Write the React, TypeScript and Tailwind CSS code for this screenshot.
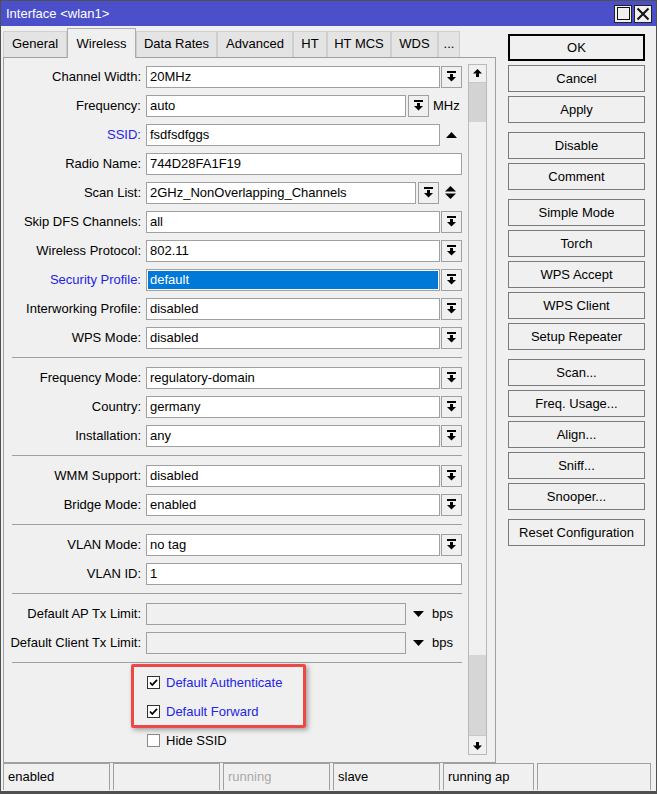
import React from "react";

const DropIcon = () => (
  <svg width="9" height="11" viewBox="0 0 9 11">
    <rect x="0" y="0" width="9" height="2" fill="#000" />
    <rect x="3" y="3" width="3" height="3" fill="#000" />
    <polygon points="0,6 9,6 4.5,10.5" fill="#000" />
  </svg>
);

const DropBtn = ({ ml = "ml-[1px]" }: { ml?: string }) => (
  <div className={`${ml} flex h-[22px] w-[21px] shrink-0 items-center justify-center border border-[#a0a0a0] bg-[#f0f0f0]`}>
    <DropIcon />
  </div>
);

const Field = ({ w, value, disabled, selected }: { w: string; value?: string; disabled?: boolean; selected?: boolean }) => (
  <div
    className={`${w} h-[22px] shrink-0 border border-[#a0a0a0] ${disabled ? "bg-[#f0f0f0]" : "bg-white"} ${selected ? "p-[1px]" : "pl-[3px]"} leading-[20px] text-black whitespace-nowrap overflow-hidden`}
  >
    {selected ? (
      <div className="h-[18px] bg-[#0078d7] pl-[2px] leading-[18px] text-white">{value}</div>
    ) : (
      value
    )}
  </div>
);

const Row = ({ label, blue, children }: { label: string; blue?: boolean; children: React.ReactNode }) => (
  <div className="flex h-[29px] items-center">
    <div className={`w-[137px] shrink-0 text-right whitespace-nowrap ${blue ? "text-[#2424e6]" : "text-black"}`}>{label}</div>
    <div className="ml-[5px] flex w-[316px] items-center">{children}</div>
  </div>
);

const SelectRow = ({ label, value, blue, selected }: { label: string; value: string; blue?: boolean; selected?: boolean }) => (
  <Row label={label} blue={blue}>
    <Field w="w-[294px]" value={value} selected={selected} />
    <DropBtn />
  </Row>
);

const Sep = () => (
  <div className="flex h-[11px] items-center">
    <div className="ml-[8px] h-px w-[450px] bg-[#a0a0a0]" />
  </div>
);

const Check = ({ label, checked, blue }: { label: string; checked?: boolean; blue?: boolean }) => (
  <div className="flex h-[29px] items-center">
    <div className={`ml-[143px] flex h-[13px] w-[13px] items-center justify-center border ${checked ? "border-[#333]" : "border-[#8a8a8a]"} bg-white`}>
      {checked && (
        <svg width="11" height="11" viewBox="0 0 11 11">
          <path d="M2 5.5 L4.3 8 L9 2.8" stroke="#000" strokeWidth="1.8" fill="none" />
        </svg>
      )}
    </div>
    <div className={`ml-[6px] ${blue ? "text-[#2424e6]" : "text-black"}`}>{label}</div>
  </div>
);

const Btn = ({ label, def }: { label: string; def?: boolean }) => (
  <div
    className={`flex h-[27px] w-[137px] items-center justify-center border ${def ? "border-black shadow-[inset_0_0_0_1px_#000]" : "border-[#7a7a7a]"} bg-[#f0f0f0] text-black`}
  >
    {label}
  </div>
);

const Tab = ({ label, w, active }: { label: string; w: string; active?: boolean }) =>
  active ? (
    <div className={`${w} relative z-10 -mb-px flex h-[30px] items-start justify-center border-x border-t border-[#adadad] bg-[#f0f0f0] pt-[5px]`}>
      {label}
    </div>
  ) : (
    <div className={`${w} flex h-[26px] items-center justify-center border-x border-t border-[#cfcfcf] bg-[#e4e4e4] pb-[1px]`}>
      {label}
    </div>
  );

const StatusCell = ({ w, text, gray }: { w: string; text?: string; gray?: boolean }) => (
  <div className={`${w} h-[27px] shrink-0 border-l border-t border-r border-[#a0a0a0] pl-[4px] leading-[26px] ${gray ? "text-[#a8a8a8]" : "text-black"}`}>
    {text}
  </div>
);

export default function App() {
  return (
    <div className="relative h-[794px] w-[657px] overflow-hidden border border-b-[3px] border-[#505050] bg-[#f0f0f0] font-['Liberation_Sans',Arial,sans-serif] text-[13px] text-black">
      {/* Title bar */}
      <div className="flex h-[25px] items-center justify-between bg-[#4b4fc9] pl-[5px] pr-[4px]">
        <div className="pt-[1px] text-white">Interface &lt;wlan1&gt;</div>
        <div className="flex gap-[2px]">
          <div className="flex h-[18px] w-[18px] items-center justify-center border border-[#222] bg-[#f0f0f0]">
            <div className="h-[13px] w-[13px] border-[1.5px] border-[#111]" />
          </div>
          <div className="flex h-[18px] w-[18px] items-center justify-center border border-[#222] bg-[#f0f0f0]">
            <svg width="14" height="14" viewBox="0 0 14 14">
              <path d="M1.5 1.5 L12.5 12.5 M12.5 1.5 L1.5 12.5" stroke="#111" strokeWidth="2" />
            </svg>
          </div>
        </div>
      </div>

      {/* Body */}
      <div className="flex h-[737px]">
        <div className="ml-[2px] flex w-[493px] flex-col">
          <div className="flex h-[31px] items-end">
            <Tab label="General" w="w-[64px]" />
            <Tab label="Wireless" w="w-[69px]" active />
            <Tab label="Data Rates" w="w-[81px]" />
            <Tab label="Advanced" w="w-[76px]" />
            <Tab label="HT" w="w-[34px]" />
            <Tab label="HT MCS" w="w-[64px]" />
            <Tab label="WDS" w="w-[47px]" />
            <Tab label="..." w="w-[22px]" />
          </div>
          <div className="flex h-[706px] border border-[#a0a0a0] bg-[#f0f0f0]">
            <div className="w-[463px] shrink-0 pt-[4px]">
              <SelectRow label="Channel Width:" value="20MHz" />
              <Row label="Frequency:">
                <Field w="w-[260px]" value="auto" />
                <DropBtn ml="ml-[2px]" />
                <div className="ml-[4px]">MHz</div>
              </Row>
              <Row label="SSID:" blue>
                <Field w="w-[294px]" value="fsdfsdfggs" />
                <div className="flex w-[22px] justify-center">
                  <svg width="11" height="6" viewBox="0 0 11 6">
                    <polygon points="0,6 11,6 5.5,0" fill="#000" />
                  </svg>
                </div>
              </Row>
              <Row label="Radio Name:">
                <Field w="w-[316px]" value="744D28FA1F19" />
              </Row>
              <Row label="Scan List:">
                <Field w="w-[270px]" value="2GHz_NonOverlapping_Channels" />
                <DropBtn ml="ml-[2px]" />
                <div className="flex w-[23px] justify-center">
                  <svg width="11" height="13" viewBox="0 0 11 13">
                    <polygon points="0,5.5 11,5.5 5.5,0" fill="#000" />
                    <polygon points="0,7.5 11,7.5 5.5,13" fill="#000" />
                  </svg>
                </div>
              </Row>
              <SelectRow label="Skip DFS Channels:" value="all" />
              <SelectRow label="Wireless Protocol:" value="802.11" />
              <SelectRow label="Security Profile:" value="default" blue selected />
              <SelectRow label="Interworking Profile:" value="disabled" />
              <SelectRow label="WPS Mode:" value="disabled" />
              <Sep />
              <SelectRow label="Frequency Mode:" value="regulatory-domain" />
              <SelectRow label="Country:" value="germany" />
              <SelectRow label="Installation:" value="any" />
              <Sep />
              <SelectRow label="WMM Support:" value="disabled" />
              <SelectRow label="Bridge Mode:" value="enabled" />
              <Sep />
              <SelectRow label="VLAN Mode:" value="no tag" />
              <Row label="VLAN ID:">
                <Field w="w-[316px]" value="1" />
              </Row>
              <Sep />
              {["Default AP Tx Limit:", "Default Client Tx Limit:"].map((l) => (
                <Row key={l} label={l}>
                  <Field w="w-[260px]" disabled />
                  <div className="flex w-[24px] justify-center">
                    <svg width="11" height="6" viewBox="0 0 11 6">
                      <polygon points="0,0 11,0 5.5,6" fill="#000" />
                    </svg>
                  </div>
                  <div className="ml-[2px]">bps</div>
                </Row>
              ))}
              <Sep />
              <Check label="Default Authenticate" checked blue />
              <Check label="Default Forward" checked blue />
              <Check label="Hide SSID" />
            </div>
            {/* Scrollbar */}
            <div className="ml-[1px] mt-[6px] flex h-[691px] w-[19px] flex-col border border-[#b9b9b9] bg-[#f0f0f0]">
              <div className="flex h-[18px] items-center justify-center border-b border-[#c8c8c8]">
                <svg width="9" height="9" viewBox="0 0 9 9">
                  <polygon points="0,4.5 9,4.5 4.5,0" fill="#000" />
                  <rect x="3" y="4" width="3" height="4" fill="#000" />
                </svg>
              </div>
              <div className="h-[39px] bg-[#d3d3d3]" />
              <div className="flex-1" />
              <div className="h-[80px] bg-[#d6d6d6]" />
              <div className="flex h-[19px] items-center justify-center border-t border-[#c8c8c8]">
                <svg width="9" height="9" viewBox="0 0 9 9">
                  <rect x="3" y="1" width="3" height="4" fill="#000" />
                  <polygon points="0,4.5 9,4.5 4.5,9" fill="#000" />
                </svg>
              </div>
            </div>
          </div>
        </div>

        {/* Buttons */}
        <div className="ml-[12px] flex flex-col pt-[8px]">
          <div className="flex flex-col gap-[4px]">
            <Btn label="OK" def />
            <Btn label="Cancel" />
            <Btn label="Apply" />
          </div>
          <div className="mt-[9px] flex flex-col gap-[4px]">
            <Btn label="Disable" />
            <Btn label="Comment" />
          </div>
          <div className="mt-[9px] flex flex-col gap-[4px]">
            <Btn label="Simple Mode" />
            <Btn label="Torch" />
            <Btn label="WPS Accept" />
            <Btn label="WPS Client" />
            <Btn label="Setup Repeater" />
          </div>
          <div className="mt-[9px] flex flex-col gap-[4px]">
            <Btn label="Scan..." />
            <Btn label="Freq. Usage..." />
            <Btn label="Align..." />
            <Btn label="Sniff..." />
            <Btn label="Snooper..." />
          </div>
          <div className="mt-[9px] flex flex-col gap-[4px]">
            <Btn label="Reset Configuration" />
          </div>
        </div>
      </div>

      {/* Status bar */}
      <div className="flex gap-[3px] pl-[2px]">
        <StatusCell w="w-[107px]" text="enabled" />
        <StatusCell w="w-[107px]" />
        <StatusCell w="w-[107px]" text="running" gray />
        <StatusCell w="w-[107px]" text="slave" />
        <StatusCell w="w-[91px]" text="running ap" />
        <StatusCell w="w-[114px]" />
      </div>

      {/* Red highlight annotation */}
      <div className="absolute left-[130px] top-[663px] h-[64px] w-[175px] rounded-[2px] border-[3px] border-[#ef4646] shadow-[2px_2px_5px_rgba(0,0,0,0.35)]" />
    </div>
  );
}
